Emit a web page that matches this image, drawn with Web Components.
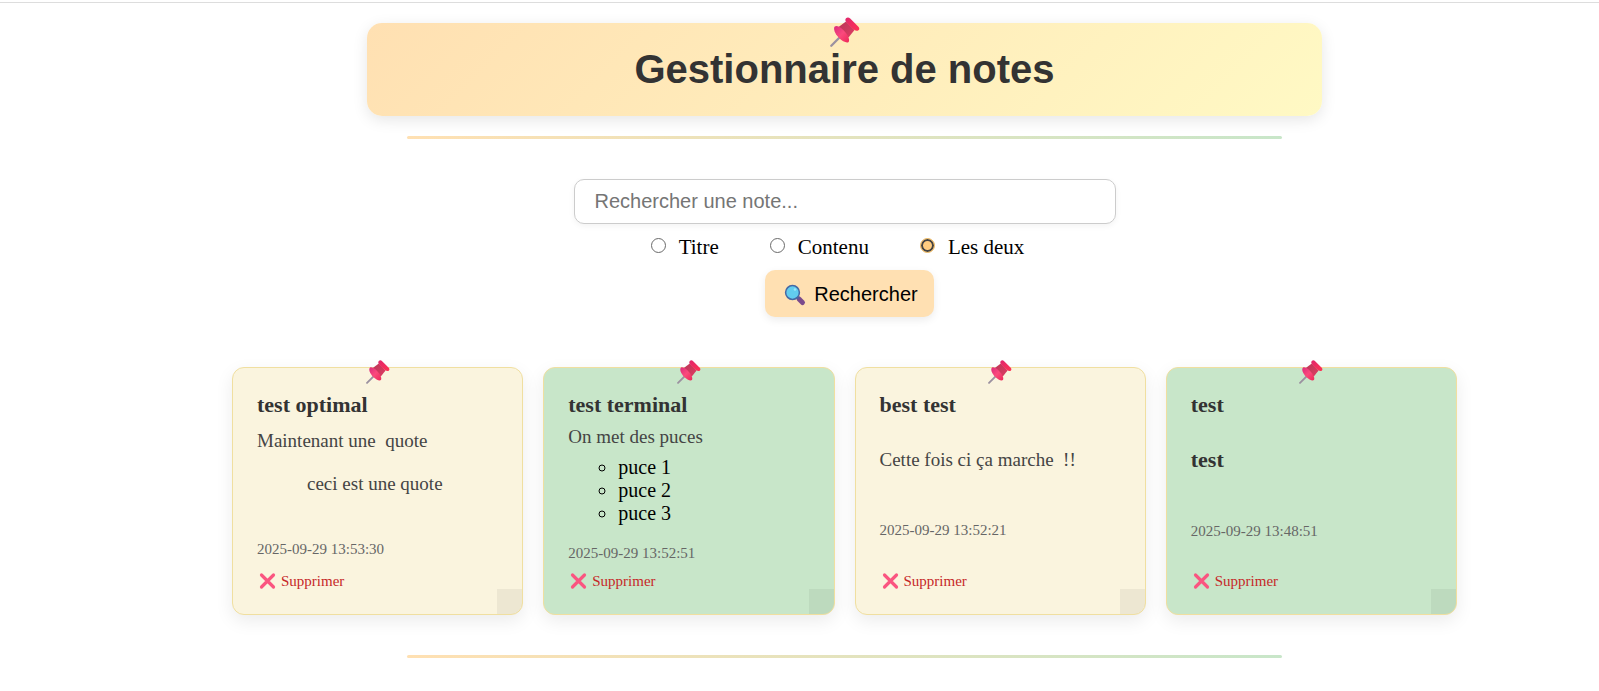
<!DOCTYPE html>
<html lang="fr">
<head>
<meta charset="utf-8">
<meta name="viewport" content="width=device-width, initial-scale=1">
<title>Gestionnaire de notes</title>
<style>
  body { margin: 0; background: #fff; color: #000; font-family: "Liberation Serif", "Times New Roman", serif; }
</style>
</head>
<body>
<notes-app></notes-app>

<template id="pin-icon">
  <style>
    :host { display: block; width: 30px; height: 30px; }
    svg { display: block; width: 100%; height: 100%; }
  </style>
  <svg viewBox="0 0 30 30" aria-hidden="true">
    <defs>
      <linearGradient id="lower" x1="0" y1="0" x2="1" y2="1">
        <stop offset="0" stop-color="#dc2a7c"/><stop offset=".5" stop-color="#fa4a7c"/><stop offset="1" stop-color="#ee2758"/>
      </linearGradient>
      <linearGradient id="neck" x1="0" y1="0" x2="1" y2="1">
        <stop offset="0" stop-color="#b93656"/><stop offset="1" stop-color="#e03c64"/>
      </linearGradient>
      <linearGradient id="upper" x1="0" y1="0" x2="1" y2="1">
        <stop offset="0" stop-color="#e0266c"/><stop offset="1" stop-color="#ff3352"/>
      </linearGradient>
    </defs>
    <path d="M1.300 28.700 11 19" stroke="#9b91a0" stroke-width="2.300" stroke-linecap="round"/>
    <path d="M8.500 10 L16 4.500 L24.500 13 L18.500 20.600 C15.500 19 10.500 14 8.500 10Z" fill="url(#neck)"/>
    <path d="M4.800 9.600C6.300 8.300 9.600 9.500 13.300 13.100 C17.900 17.600 20.200 23 18.600 24.900 C16.900 26.600 12.600 24.400 8.800 20.800 C4.600 16.600 3 11.400 4.800 9.600Z" fill="url(#lower)"/>
    <path d="M16 1.300 C17.200 0 18.900 .2 20.200 1.500 L28.400 9.700 C29.600 11 29.600 12.500 28.400 13.300 C27.200 14.200 25.500 13.900 24.200 12.800 C21.200 10.600 18.300 7.800 16.200 5.100 C15.200 3.800 15 2.400 16 1.300Z" fill="url(#upper)"/>
  </svg>
</template>

<template id="page-banner">
  <style>
    :host { display: block; position: relative; box-sizing: border-box; padding: 24px;
      border-radius: 15px; background: linear-gradient(135deg, #ffe0b2, #fff9c4);
      box-shadow: 0 4px 15px rgba(0, 0, 0, .1); text-align: center; }
    h1 { margin: 0; font: bold 40px/45px "Liberation Sans", Arial, sans-serif; color: #333; }
    pin-icon { position: absolute; top: -6px; left: calc(50% - 15px); }
  </style>
  <pin-icon></pin-icon>
  <h1><slot></slot></h1>
</template>

<template id="pastel-rule">
  <style>
    :host { display: block; }
    hr { margin: 0; border: 0; height: 3px; border-radius: 2px; background: linear-gradient(90deg, #ffe0b2, #c8e6c9); }
  </style>
  <hr>
</template>

<template id="note-search">
  <style>
    :host { display: block; }
    form { display: flex; flex-direction: column; align-items: center; margin: 0; }
    input[type="search"] { appearance: none; box-sizing: border-box; width: 100%; max-width: 542px; height: 45px; margin: 0;
      padding: 0 20px; border: 1px solid #ccc; border-radius: 10px; background: #fff; outline: 0;
      box-shadow: 0 2px 6px rgba(0, 0, 0, .05); font: 20px "Liberation Sans", Arial, sans-serif; }
    input::placeholder { color: #757575; opacity: 1; }
    fieldset { display: flex; gap: 51px; margin: 11px 0; padding: 0 14px 0 0; border: 0; }
    label { display: flex; gap: 13px; font-size: 21px; line-height: 24px; }
    input[type="radio"] { appearance: none; box-sizing: border-box; width: 15px; height: 15px; margin: 3px 0 0;
      border: 1px solid #6a6a6a; border-radius: 50%; background: #fff; }
    input[type="radio"]:checked { border: 1px solid #e8b765; background: #ffcc80; box-shadow: inset 0 0 0 2px #444; }
    button { display: flex; align-items: center; gap: 5px; height: 47px; margin: 0 0 0 10px; padding: 2px 16px 0;
      border: 0; border-radius: 10px; background: #ffe0b2; color: #000;
      box-shadow: 0 3px 8px rgba(0, 0, 0, .08); font: 20px "Liberation Sans", Arial, sans-serif; }
    svg { width: 28px; height: 28px; }
  </style>
  <form>
    <input type="search" placeholder="Rechercher une note..." aria-label="Rechercher une note">
    <fieldset aria-label="Rechercher dans">
      <label><input type="radio" name="scope" value="title">Titre</label>
      <label><input type="radio" name="scope" value="content">Contenu</label>
      <label><input type="radio" name="scope" value="both" checked>Les deux</label>
    </fieldset>
    <button type="button">
      <svg viewBox="0 0 28 28" aria-hidden="true">
        <path d="M18 18 21.500 21.500" stroke="#7b4a8c" stroke-width="5" stroke-linecap="round"/>
        <path d="M16 16 18 18" stroke="#5f5a96" stroke-width="2.500"/>
        <circle cx="11.500" cy="11.500" r="6.900" fill="#62cdee" stroke="#4668a4" stroke-width="1.500"/>
        <circle cx="14" cy="8.500" r="1.300" fill="#9be6fa"/>
      </svg>
      <span>Rechercher</span>
    </button>
  </form>
</template>

<template id="note-card">
  <style>
    :host { display: flex; flex-direction: column; position: relative; box-sizing: border-box; padding: 24px 24px 23px;
      border: 1px solid #f0dfa0; border-radius: 12px; background: #faf4de;
      box-shadow: 0 6px 18px rgba(0, 0, 0, .08); color: #444; font-size: 19px; line-height: 23px; }
    :host([tone="green"]) { background: #c8e6c9; }
    :host::after { content: ""; position: absolute; right: 0; bottom: 0; width: 25px; height: 25px;
      border-bottom-right-radius: 11px; background: rgba(0, 0, 0, .05); }
    pin-icon { position: absolute; top: -8px; left: calc(50% - 12px); width: 24px; height: 24px; }
    h2, ::slotted(h2) { margin: 0; font-size: 22px; line-height: 25px; color: #333; }
    .content { padding: 8px 0 19px; }
    :host([spacing="quote"]) .content { padding: 12px 0 45px; }
    :host([spacing="wide"]) .content { padding: 31px 0 50px; }
    :host([spacing="heading"]) .content { padding: 30px 0 50px; }
    ::slotted(p) { margin: 0; }
    ::slotted(blockquote) { margin: 20px 0 0 50px; }
    ::slotted(ul) { margin: 8px 0 0; padding: 0 0 0 50px; list-style: circle; font-size: 20px; color: #000; }
    time { font-size: 15px; line-height: 19px; color: #666; }
    a { display: flex; align-items: center; align-self: flex-start; gap: 4px; margin-top: auto;
      font-size: 15px; line-height: 19px; color: #c62828; text-decoration: none; }
    time + a { padding-top: 9px; }
    svg { width: 20px; height: 19px; }
  </style>
  <pin-icon></pin-icon>
  <h2></h2>
  <div class="content"><slot></slot></div>
  <time></time>
  <a href="#">
    <svg viewBox="0 0 20 19" aria-hidden="true">
      <path d="M4.500 3 16.500 15 M16.500 3 4.500 15" stroke="#fa5580" stroke-width="3.200" stroke-linecap="round"/>
    </svg>
    <span>Supprimer</span>
  </a>
</template>

<template id="notes-app">
  <style>
    :host { display: block; padding: 2px 0 33px; }
    .top { border-top: 1px solid #ddd; }
    main { display: flex; flex-direction: column; align-items: center; padding: 20px 0 0 90px; }
    page-banner { width: 100%; max-width: 955px; }
    pastel-rule { width: 100%; max-width: 875px; margin: 20px 0 40px; }
    note-search { width: 100%; }
    .notes { display: grid; grid-template-columns: repeat(auto-fit, minmax(260px, 1fr)); gap: 20px;
      width: 100%; max-width: 1225px; margin-top: 50px; }
    .notes + pastel-rule { margin: 40px 0 0; }
  </style>
  <div class="top"></div>
  <main>
    <page-banner>Gestionnaire de notes</page-banner>
    <pastel-rule></pastel-rule>
    <note-search></note-search>
    <section class="notes">
      <note-card heading="test optimal" date="2025-09-29 13:53:30" spacing="quote"><p>Maintenant une&nbsp; quote</p><blockquote>ceci est une quote</blockquote></note-card>
      <note-card heading="test terminal" date="2025-09-29 13:52:51" tone="green"><p>On met des puces</p><ul><li>puce 1</li><li>puce 2</li><li>puce 3</li></ul></note-card>
      <note-card heading="best test" date="2025-09-29 13:52:21" spacing="wide"><p>Cette fois ci ça marche&nbsp; !!</p></note-card>
      <note-card heading="test" date="2025-09-29 13:48:51" tone="green" spacing="heading"><h2>test</h2></note-card>
    </section>
    <pastel-rule></pastel-rule>
  </main>
</template>

<script>
  class TemplateElement extends HTMLElement {
    constructor() {
      super();
      const template = document.getElementById(this.localName);
      this.attachShadow({ mode: "open" }).append(template.content.cloneNode(true));
    }
  }
  class PinIcon extends TemplateElement {}
  class PageBanner extends TemplateElement {}
  class PastelRule extends TemplateElement {}
  class NoteSearch extends TemplateElement {}
  class NoteCard extends TemplateElement {
    connectedCallback() {
      this.shadowRoot.querySelector("h2").textContent = this.getAttribute("heading");
      const time = this.shadowRoot.querySelector("time");
      time.textContent = time.dateTime = this.getAttribute("date");
    }
  }
  class NotesApp extends TemplateElement {}
  customElements.define("pin-icon", PinIcon);
  customElements.define("page-banner", PageBanner);
  customElements.define("pastel-rule", PastelRule);
  customElements.define("note-search", NoteSearch);
  customElements.define("note-card", NoteCard);
  customElements.define("notes-app", NotesApp);
</script>
</body>
</html>
